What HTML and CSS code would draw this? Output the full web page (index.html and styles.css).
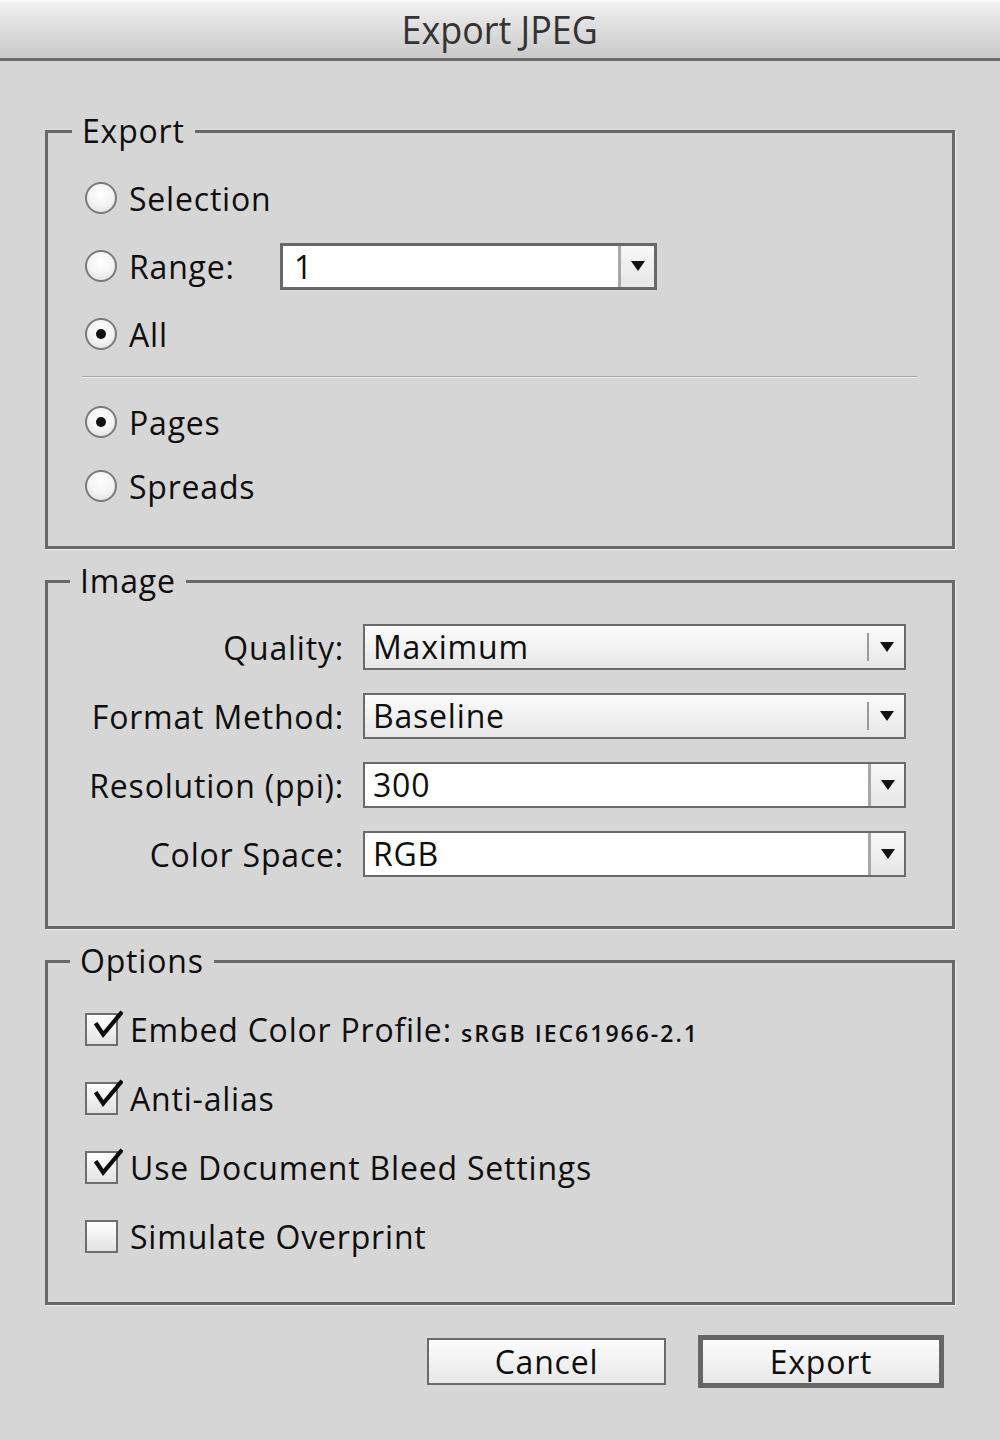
FILE: index.html
```html
<!DOCTYPE html>
<html>
<head>
<meta charset="utf-8">
<link rel="stylesheet" href="styles.css">
</head>
<body>
<div class="dialog">
  <div class="titlebar"><span class="title">Export JPEG</span></div>
  <div class="content">
    <fieldset class="group group-export">
      <legend>Export</legend>
      <div class="row"><span class="radio"></span><span class="label">Selection</span></div>
      <div class="row"><span class="radio"></span><span class="label range-label">Range:</span>
        <div class="combo range-combo"><span class="combo-text">1</span><span class="combo-btn"><span class="arrow"></span></span></div>
      </div>
      <div class="row"><span class="radio checked"></span><span class="label">All</span></div>
      <div class="separator"></div>
      <div class="row"><span class="radio checked"></span><span class="label">Pages</span></div>
      <div class="row row-last"><span class="radio"></span><span class="label">Spreads</span></div>
    </fieldset>

    <fieldset class="group group-image">
      <legend>Image</legend>
      <div class="form-grid">
        <span class="field-label">Quality:</span>
        <div class="select popup"><span class="select-text">Maximum</span><span class="select-divider"></span><span class="arrow"></span></div>
        <span class="field-label">Format Method:</span>
        <div class="select popup"><span class="select-text">Baseline</span><span class="select-divider"></span><span class="arrow"></span></div>
        <span class="field-label">Resolution (ppi):</span>
        <div class="select editable"><span class="select-text">300</span><span class="combo-btn"><span class="arrow"></span></span></div>
        <span class="field-label">Color Space:</span>
        <div class="select editable"><span class="select-text">RGB</span><span class="combo-btn"><span class="arrow"></span></span></div>
      </div>
    </fieldset>

    <fieldset class="group group-options">
      <legend>Options</legend>
      <div class="row"><span class="checkbox checked"><svg viewBox="0 0 36 36" class="check"><path d="M7 15 L15 27 L35 3" /></svg></span><span class="label">Embed Color Profile: <span class="small">sRGB IEC61966-2.1</span></span></div>
      <div class="row"><span class="checkbox checked"><svg viewBox="0 0 36 36" class="check"><path d="M7 15 L15 27 L35 3" /></svg></span><span class="label">Anti-alias</span></div>
      <div class="row"><span class="checkbox checked"><svg viewBox="0 0 36 36" class="check"><path d="M7 15 L15 27 L35 3" /></svg></span><span class="label">Use Document Bleed Settings</span></div>
      <div class="row"><span class="checkbox"></span><span class="label">Simulate Overprint</span></div>
    </fieldset>

    <div class="buttons">
      <button class="btn">Cancel</button>
      <button class="btn btn-default">Export</button>
    </div>
  </div>
</div>
</body>
</html>
```

FILE: styles.css
```css
* { box-sizing: border-box; }
html, body {
  margin: 0;
  padding: 0;
  background: #d6d6d6;
}
body {
  font-family: "Open Sans", "DejaVu Sans", sans-serif;
  color: #0e0e0e;
}
.dialog {
  width: 1000px;
  height: 1440px;
  background: #d6d6d6;
}
.titlebar {
  height: 61px;
  background: linear-gradient(#f2f2f2 0%, #e4e4e4 30%, #c9c9c9 100%);
  border-top: 2px solid #f8f8f8;
  border-bottom: 3px solid #6b6b6b;
  display: flex;
  justify-content: center;
  align-items: center;
}
.title {
  font-size: 39px;
  color: #333;
  display: inline-block;
  transform: scaleX(0.92);
  margin-top: -3px;
}
.content {
  padding: 0 45px;
}
.group {
  margin: 0;
  border: 3px solid #686868;
  box-shadow: 1px 1px 0 #ececec;
  min-width: 0;
}
.group legend {
  padding: 0 10px;
  font-size: 32px;
  letter-spacing: 0.8px;
  line-height: 40px;
  height: 40px;
}
.group-export {
  margin-top: 50px;
  padding: 23px 35px 36px 24px;
}
.group-image {
  margin-top: 12px;
  padding: 23px 46px 49px 24px;
}
.group-image legend { margin-left: -2px; }
.group-options {
  margin-top: 12px;
  padding: 24px 35px 42px 24px;
}
.group-options legend { margin-left: -2px; }

.row {
  height: 48px;
  display: flex;
  align-items: center;
  margin-left: 13px;
  margin-bottom: 20px;
}
.group-export .row:nth-of-type(3) { margin-bottom: 18px; }
.group-export .row-last { margin-bottom: 0; margin-top: -4px; }
.group-options .row { margin-bottom: 21px; }
.group-options .row:last-child { margin-bottom: 0; }

.label {
  font-size: 32px;
  letter-spacing: 0.8px;
  margin-left: 12px;
  white-space: nowrap;
}
.small {
  font-size: 23px;
  font-weight: 600;
  letter-spacing: 2px;
}
.range-label {
  width: 151px;
  flex: none;
}

.radio {
  width: 32px;
  height: 32px;
  border-radius: 50%;
  border: 2px solid #7a7a7a;
  background: radial-gradient(circle at 50% 35%, #ffffff 0%, #f4f4f4 50%, #dcdcdc 100%);
  flex: none;
  display: flex;
  align-items: center;
  justify-content: center;
}
.radio.checked::after {
  content: "";
  width: 10px;
  height: 10px;
  border-radius: 50%;
  background: #111;
}

.separator {
  height: 2px;
  background: #a6a6a6;
  border-bottom: 1px solid #ececec;
  margin: 0 0 20px 10px;
}

.combo {
  display: flex;
  height: 47px;
  border: 3px solid #686868;
  background: #fff;
  flex: none;
}
.range-combo { width: 377px; }
.combo-text, .select-text {
  flex: 1;
  font-size: 32px;
  letter-spacing: 0.8px;
  line-height: 41px;
  padding-left: 8px;
  white-space: nowrap;
}
.range-combo .combo-text { padding-left: 11px; }
.combo-btn {
  width: 36px;
  flex: none;
  border-left: 3px solid #a8a8a8;
  background: linear-gradient(#f8f8f8, #e6e6e6);
  display: flex;
  align-items: center;
  justify-content: center;
}
.arrow {
  width: 0;
  height: 0;
  border-left: 7px solid transparent;
  border-right: 7px solid transparent;
  border-top: 10px solid #111;
}

.form-grid {
  display: grid;
  grid-template-columns: 272px 543px;
  column-gap: 19px;
  row-gap: 23px;
  align-items: center;
}
.field-label {
  text-align: right;
  font-size: 32px;
  letter-spacing: 0.8px;
  white-space: nowrap;
}
.select {
  height: 46px;
  border: 2px solid #6a6a6a;
  display: flex;
  align-items: stretch;
}
.select.popup {
  background: linear-gradient(#fbfbfb, #e7e7e7);
}
.select.popup .arrow { align-self: center; margin: 0 10px 0 11px; }
.select-divider {
  width: 2px;
  background: #9a9a9a;
  margin: 7px 0;
}
.select.editable { background: #fff; }
.select.editable .combo-btn { width: 36px; }

.checkbox {
  position: relative;
  width: 33px;
  height: 33px;
  border: 2px solid #6e6e6e;
  background: linear-gradient(#ffffff, #e2e2e2);
  flex: none;
}
.checkbox .check {
  position: absolute;
  left: 2px;
  top: -6px;
  width: 34px;
  height: 34px;
  fill: none;
  stroke: #0c0c0c;
  stroke-width: 4.5px;
  stroke-linejoin: miter;
}

.buttons {
  display: flex;
  justify-content: flex-end;
  align-items: center;
  gap: 32px;
  margin-top: 30px;
  padding-right: 11px;
  height: 53px;
}
.btn {
  font-family: "Open Sans", "DejaVu Sans", sans-serif;
  font-size: 32px;
  letter-spacing: 0.8px;
  color: #0e0e0e;
  background: linear-gradient(#fcfcfc, #e8e8e8);
  border: 2px solid #6a6a6a;
  width: 239px;
  height: 47px;
  padding: 0;
  line-height: 41px;
}
.btn-default {
  width: 246px;
  height: 53px;
  border: 5px solid #666;
}
```
